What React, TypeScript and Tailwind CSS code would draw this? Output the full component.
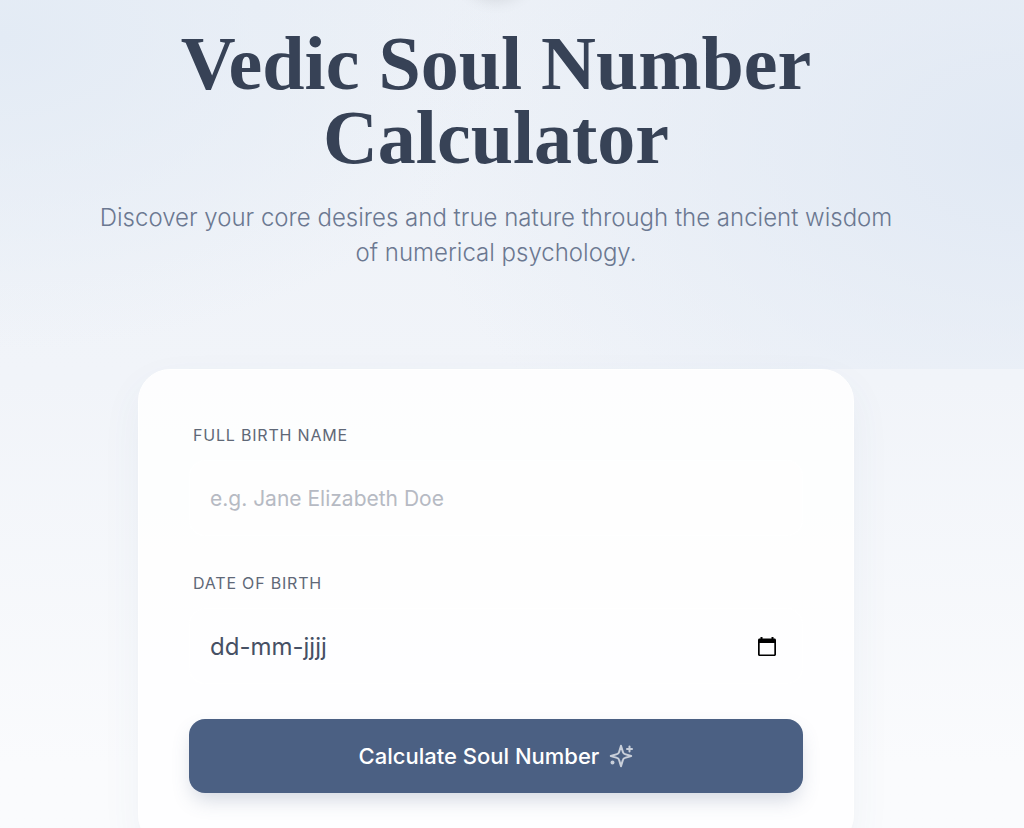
import * as React from "react"

const labelClass = "block pl-1 text-base leading-6 tracking-wider uppercase text-[#5f6877]"
const fieldClass =
  "h-[76px] w-full rounded-2xl border border-white/40 bg-white/40 px-5 focus:outline-none focus:ring-2 focus:ring-[#4b6083]/30"

function CalendarIcon() {
  return (
    <svg viewBox="0 0 24 24" className="size-6" fill="currentColor" aria-hidden="true">
      <path d="M19.500 4.500H18.500V3H16.500V4.500H7.500V3H5.500V4.500H4.500C3.700 4.500 3 5.200 3 6V20.500C3 21.300 3.700 22 4.500 22H19.500C20.300 22 21 21.300 21 20.500V6C21 5.200 20.300 4.500 19.500 4.500ZM19.300 20.500H4.700V9H19.300V20.500Z" />
    </svg>
  )
}

function SparklesIcon() {
  return (
    <svg
      viewBox="0 0 24 24"
      className="size-6 opacity-70"
      fill="none"
      stroke="currentColor"
      strokeWidth="2"
      strokeLinecap="round"
      strokeLinejoin="round"
      aria-hidden="true"
    >
      <path d="M12 1.800 10.100 8a3 3 0 0 1-2.100 2.100L1.800 12 8 13.900a3 3 0 0 1 2.100 2.100L12 22.200 13.900 16a3 3 0 0 1 2.100-2.100L22.200 12 16 10.100a3 3 0 0 1-2.100-2.100Z" />
      <path d="M20.500 2.500v5" />
      <path d="M23 5h-5" />
      <circle cx="3.500" cy="18.500" r="1" fill="currentColor" />
    </svg>
  )
}

export default function App() {
  const [name, setName] = React.useState("")
  const [birthDate, setBirthDate] = React.useState("")

  return (
    <main className="relative min-h-screen overflow-hidden bg-linear-to-b from-[#f1f4f9] from-45% to-[#fafbfd] to-90% font-['Inter',sans-serif]">
      <header className="h-[369px] bg-[radial-gradient(ellipse_60%_110%_at_100%_40%,#e1e9f4_0%,#e1e9f400_100%),radial-gradient(ellipse_50%_85%_at_0%_10%,#e3ebf5_0%,#e3ebf500_100%),linear-gradient(to_bottom,#edf1f7,#f1f4f9)] pt-[26px] pr-8 text-center">
        {/* Shadow of the badge above the title */}
        <div className="absolute inset-x-0 -top-[86px] flex justify-center pr-8">
          <div className="size-20 rounded-full bg-white shadow-lg" />
        </div>

        <h1 className="mx-auto max-w-[820px] font-['Liberation_Serif',serif] text-[76px] leading-[74px] font-bold text-[#374256]">
          Vedic Soul Number Calculator
        </h1>
        <p className="mx-auto mt-[26px] max-w-[820px] text-2xl leading-[35px] font-light text-[#6b7891]">
          Discover your core desires and true nature through the ancient wisdom of numerical psychology.
        </p>
      </header>

      <section className="pr-8">
        <form
          className="mx-auto flex max-w-[716px] flex-col gap-[35px] rounded-[32px] border border-white bg-white/85 px-[50px] py-[53px] shadow-[0_16px_40px_rgba(75,96,131,0.06)]"
          onSubmit={(e) => e.preventDefault()}
        >
          <div className="flex flex-col gap-[13px]">
            <label htmlFor="name" className={labelClass}>
              Full Birth Name
            </label>
            <input
              id="name"
              type="text"
              value={name}
              onChange={(e) => setName(e.target.value)}
              placeholder="e.g. Jane Elizabeth Doe"
              className={`${fieldClass} text-[21px] text-[#374256] placeholder:text-[#b6bac3]`}
            />
          </div>

          <div className="flex flex-col gap-[13px]">
            <label htmlFor="birth-date" className={labelClass}>
              Date of Birth
            </label>
            <div className="relative">
              <input
                id="birth-date"
                type="text"
                value={birthDate}
                onChange={(e) => setBirthDate(e.target.value)}
                placeholder="dd-mm-jjjj"
                className={`${fieldClass} text-2xl text-[#374256] placeholder:text-[#465064]`}
              />
              <button
                type="button"
                aria-label="Open calendar"
                className="absolute inset-y-0 right-6 flex items-center text-black"
              >
                <CalendarIcon />
              </button>
            </div>
          </div>

          <button
            type="submit"
            className="flex h-[74px] w-full items-center justify-center gap-2.5 rounded-2xl bg-[#4b6083] text-[22px] font-medium text-white shadow-[0_10px_20px_-4px_rgba(75,96,131,0.25)] hover:bg-[#425677]"
          >
            Calculate Soul Number
            <SparklesIcon />
          </button>
        </form>
      </section>
    </main>
  )
}
